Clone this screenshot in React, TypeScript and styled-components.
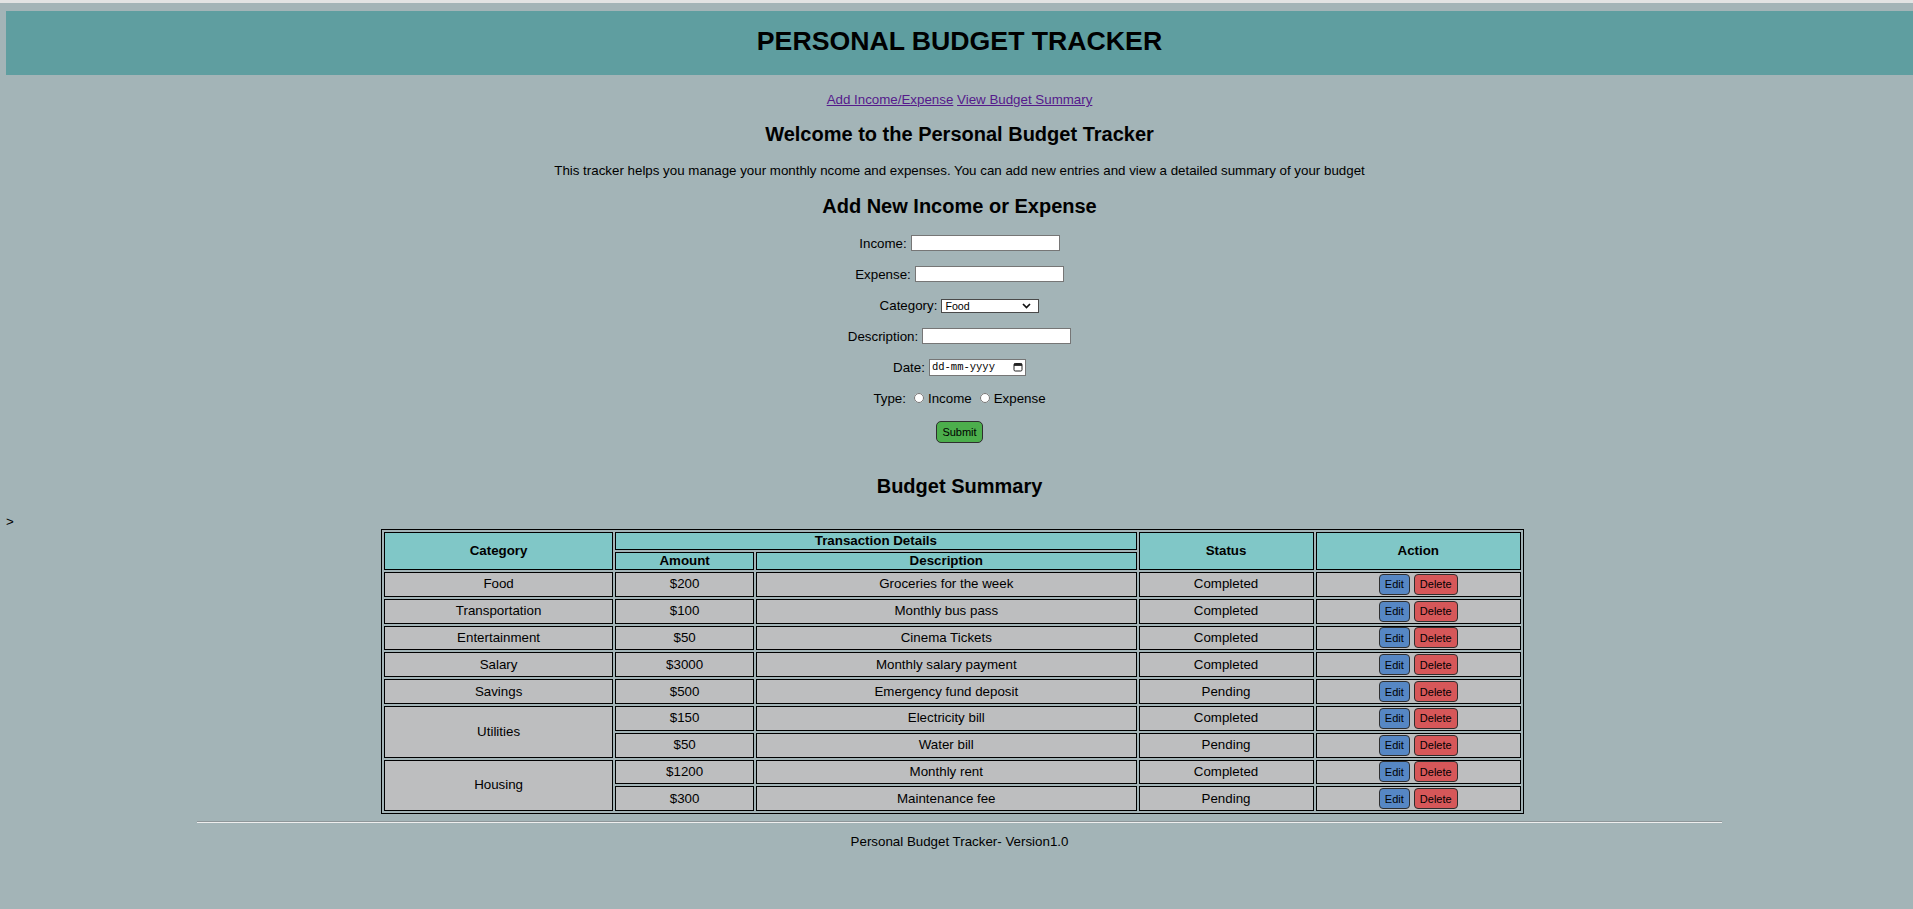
import styled, { createGlobalStyle } from "styled-components";

const GlobalStyle = createGlobalStyle`
  html, body {
    margin: 0;
    padding: 0;
  }
  body {
    background-color: #a3b4b7;
    border-top: 3px solid #e2e3e3;
    font-family: "Liberation Sans", Arial, sans-serif;
    font-size: 13.33px;
    color: #000;
  }
`;

const Page = styled.div`
  padding: 8px 0 40px 6px;
`;

const Header = styled.header`
  background-color: #5f9ea0;
  height: 64px;
  box-sizing: border-box;
  padding-bottom: 4px;
  display: flex;
  align-items: center;
  justify-content: center;
`;

const Title = styled.h1`
  margin: 0;
  font-size: 26.67px;
  line-height: 1;
  font-weight: bold;
`;

const Nav = styled.nav`
  margin-top: 17px;
  line-height: 16px;
  text-align: center;

  a {
    color: #551a8b;
    text-decoration: underline;
  }
`;

const Heading = styled.h2<{ $mt: number }>`
  margin: ${(p) => p.$mt}px 0 0;
  font-size: 20px;
  line-height: 24px;
  font-weight: bold;
  text-align: center;
`;

const Intro = styled.p`
  margin: 17px 0 0;
  line-height: 16px;
  text-align: center;
`;

const Form = styled.form`
  margin-top: 15px;
  display: flex;
  flex-direction: column;
  gap: 11px;
`;

const FieldRow = styled.div`
  height: 20px;
  display: flex;
  align-items: center;
  justify-content: center;
  gap: 4px;
`;

const SubmitRow = styled(FieldRow)`
  height: 22px;
  margin-top: 2px;
`;

const TextInput = styled.input`
  width: 149px;
  height: 16px;
  box-sizing: border-box;
  border: 1px solid #767676;
  border-radius: 0;
  background: #fff;
  padding: 0 2px;
  margin: 0;
  font-size: 11px;
`;

const SelectWrap = styled.span`
  position: relative;
  display: inline-block;
  width: 98px;
  height: 14px;

  svg {
    position: absolute;
    right: 8px;
    top: 5px;
    pointer-events: none;
  }
`;

const Select = styled.select`
  appearance: none;
  width: 98px;
  height: 14px;
  box-sizing: border-box;
  border: 1px solid #4a4a4a;
  border-radius: 0;
  background: #fff;
  margin: 0;
  padding: 0 0 0 3px;
  font-family: "Liberation Sans", Arial, sans-serif;
  font-size: 10.67px;
  line-height: 12px;
  color: #000;
`;

const DateBox = styled.span`
  display: inline-flex;
  align-items: center;
  justify-content: space-between;
  width: 97px;
  height: 17px;
  box-sizing: border-box;
  border: 1px solid #767676;
  background: #fff;
  padding: 0 2px 0 2px;
  font-family: "Liberation Mono", "DejaVu Sans Mono", monospace;
  font-size: 10.5px;
  color: #000;
`;

const RadioOption = styled.label`
  display: inline-flex;
  align-items: center;
  gap: 4px;
  margin-left: 4px;

  input {
    width: 10px;
    height: 10px;
    margin: 0;
  }
`;

const Button = styled.button<{ $bg: string }>`
  height: 21px;
  box-sizing: border-box;
  padding: 0 5px;
  margin: 0;
  border: 1px solid #2e2e2e;
  border-radius: 4px;
  background-color: ${(p) => p.$bg};
  font-family: "Liberation Sans", Arial, sans-serif;
  font-size: 11px;
  color: #000;
`;

const SubmitButton = styled(Button)`
  height: 22px;
  border-radius: 5px;
`;

const Stray = styled.div`
  margin-top: 17px;
  line-height: 14px;
  text-align: left;
`;

const TableWrap = styled.div`
  display: flex;
  justify-content: center;
  padding-right: 14px;
`;

const Table = styled.table`
  width: 1143px;
  border: 1px solid #000;
  border-spacing: 2px;
  font-size: 13.33px;
`;

const HeadCell = styled.th`
  background-color: #80c7c7;
  border: 1px solid #000;
  padding: 0;
  line-height: 16px;
  font-weight: bold;
  text-align: center;
`;

const Cell = styled.td`
  background-color: #bdbebf;
  border: 1px solid #000;
  padding: 0;
  height: 22.8px;
  line-height: 16px;
  text-align: center;
  vertical-align: middle;
`;

const ActionGroup = styled.span`
  display: inline-flex;
  gap: 4px;
  vertical-align: middle;
`;

const Rule = styled.hr`
  width: 80%;
  height: 0;
  margin: 7px auto 0;
  border: none;
  border-top: 1px solid #8e9699;
  border-bottom: 1px solid #eeeeee;
`;

const Footer = styled.footer`
  margin-top: 11px;
  line-height: 16px;
  text-align: center;
`;

type Entry = {
  category?: string;
  span?: number;
  amount: string;
  description: string;
  status: string;
};

const entries: Entry[] = [
  { category: "Food", amount: "$200", description: "Groceries for the week", status: "Completed" },
  { category: "Transportation", amount: "$100", description: "Monthly bus pass", status: "Completed" },
  { category: "Entertainment", amount: "$50", description: "Cinema Tickets", status: "Completed" },
  { category: "Salary", amount: "$3000", description: "Monthly salary payment", status: "Completed" },
  { category: "Savings", amount: "$500", description: "Emergency fund deposit", status: "Pending" },
  { category: "Utilities", span: 2, amount: "$150", description: "Electricity bill", status: "Completed" },
  { amount: "$50", description: "Water bill", status: "Pending" },
  { category: "Housing", span: 2, amount: "$1200", description: "Monthly rent", status: "Completed" },
  { amount: "$300", description: "Maintenance fee", status: "Pending" },
];

const Chevron = () => (
  <svg width="9" height="6" viewBox="0 0 9 6">
    <polyline points="1,1 4.5,4.5 8,1" fill="none" stroke="#111" strokeWidth="1.7" />
  </svg>
);

const CalendarIcon = () => (
  <svg width="10" height="10" viewBox="0 0 10 10">
    <rect x="1" y="1.5" width="8" height="7.5" rx="1.2" fill="none" stroke="#222" strokeWidth="1" />
    <rect x="1" y="1.5" width="8" height="2.4" fill="#222" />
  </svg>
);

const App = () => {
  return (
    <>
      <GlobalStyle />
      <Page>
        <Header>
          <Title>PERSONAL BUDGET TRACKER</Title>
        </Header>

        <Nav>
          <a href="#add">Add Income/Expense</a> <a href="#summary">View Budget Summary</a>
        </Nav>

        <Heading $mt={14}>Welcome to the Personal Budget Tracker</Heading>
        <Intro>
          This tracker helps you manage your monthly ncome and expenses. You can add new entries and
          view a detailed summary of your budget
        </Intro>

        <Heading $mt={15} id="add">
          Add New Income or Expense
        </Heading>
        <Form onSubmit={(e) => e.preventDefault()}>
          <FieldRow>
            <span>Income:</span>
            <TextInput type="text" />
          </FieldRow>
          <FieldRow>
            <span>Expense:</span>
            <TextInput type="text" />
          </FieldRow>
          <FieldRow>
            <span>Category:</span>
            <SelectWrap>
              <Select defaultValue="Food">
                <option>Food</option>
                <option>Transportation</option>
                <option>Entertainment</option>
                <option>Salary</option>
                <option>Savings</option>
                <option>Utilities</option>
                <option>Housing</option>
              </Select>
              <Chevron />
            </SelectWrap>
          </FieldRow>
          <FieldRow>
            <span>Description:</span>
            <TextInput type="text" />
          </FieldRow>
          <FieldRow>
            <span>Date:</span>
            <DateBox>
              <span>dd-mm-yyyy</span>
              <CalendarIcon />
            </DateBox>
          </FieldRow>
          <FieldRow>
            <span>Type:</span>
            <RadioOption>
              <input type="radio" name="type" />
              Income
            </RadioOption>
            <RadioOption>
              <input type="radio" name="type" />
              Expense
            </RadioOption>
          </FieldRow>
          <SubmitRow>
            <SubmitButton type="submit" $bg="#4cae4c">
              Submit
            </SubmitButton>
          </SubmitRow>
        </Form>

        <Heading $mt={31} id="summary">
          Budget Summary
        </Heading>
        <Stray>&gt;</Stray>

        <TableWrap>
          <Table>
            <colgroup>
              <col style={{ width: "20.3%" }} />
              <col style={{ width: "12.3%" }} />
              <col style={{ width: "33.7%" }} />
              <col style={{ width: "15.5%" }} />
              <col style={{ width: "18.2%" }} />
            </colgroup>
            <thead>
              <tr>
                <HeadCell rowSpan={2}>Category</HeadCell>
                <HeadCell colSpan={2}>Transaction Details</HeadCell>
                <HeadCell rowSpan={2}>Status</HeadCell>
                <HeadCell rowSpan={2}>Action</HeadCell>
              </tr>
              <tr>
                <HeadCell>Amount</HeadCell>
                <HeadCell>Description</HeadCell>
              </tr>
            </thead>
            <tbody>
              {entries.map((row, i) => (
                <tr key={i}>
                  {row.category && <Cell rowSpan={row.span ?? 1}>{row.category}</Cell>}
                  <Cell>{row.amount}</Cell>
                  <Cell>{row.description}</Cell>
                  <Cell>{row.status}</Cell>
                  <Cell>
                    <ActionGroup>
                      <Button $bg="#5687c4">Edit</Button>
                      <Button $bg="#d65759">Delete</Button>
                    </ActionGroup>
                  </Cell>
                </tr>
              ))}
            </tbody>
          </Table>
        </TableWrap>

        <Rule />
        <Footer>Personal Budget Tracker- Version1.0</Footer>
      </Page>
    </>
  );
};

export default App;
